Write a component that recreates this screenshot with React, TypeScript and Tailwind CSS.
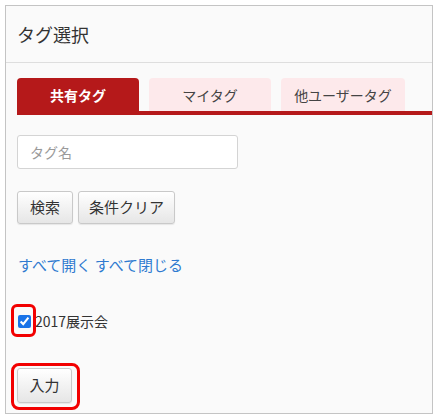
import React, { useState } from 'react';

const font = { fontFamily: '"Noto Sans CJK JP", "Liberation Sans", sans-serif' };

const tabs = ['共有タグ', 'マイタグ', '他ユーザータグ'];

const App: React.FC = () => {
  const [active, setActive] = useState(0);
  const [checked, setChecked] = useState(true);

  return (
    <div className="w-[437px] h-[417px] bg-white p-[5px]" style={font}>
      <div className="w-[428px] h-[409px] border border-[#c4c4c4] bg-[#fafafa] flex flex-col">
        {/* ヘッダー */}
        <div className="h-[57px] border-b border-[#dedede] flex items-center pl-[11px]">
          <h1 className="text-[18px] text-[#333] leading-none">タグ選択</h1>
        </div>

        <div className="pl-[11px] pt-[15px]">
          {/* タブ */}
          <div className="flex gap-[10px] border-b-4 border-[#b5191a]">
            {tabs.map((t, i) => (
              <button
                key={t}
                onClick={() => setActive(i)}
                className={
                  'h-[33px] rounded-t-[4px] text-[14px] leading-none ' +
                  (i === 2 ? 'w-[124px] ' : 'w-[122px] ') +
                  (i === active ? 'bg-[#b5191a] text-white font-bold' : 'bg-[#fde9eb] text-[#444]')
                }
              >
                {t}
              </button>
            ))}
          </div>

          <input
            type="text"
            placeholder="タグ名"
            className="mt-[20px] block w-[221px] h-[34px] rounded-[3px] border border-[#d4d4d4] bg-white px-[12px] text-[14px] placeholder:text-[#9a9a9a] outline-none"
          />

          <div className="mt-[22px] flex gap-[5px]">
            <button className="h-[33px] px-[12px] rounded-[3px] border border-[#c9c9c9] bg-gradient-to-b from-white to-[#e6e6e6] text-[15px] text-[#333] shadow-[0_1px_1px_rgba(0,0,0,0.08)]">
              検索
            </button>
            <button className="h-[33px] px-[10px] rounded-[3px] border border-[#c9c9c9] bg-gradient-to-b from-white to-[#e6e6e6] text-[15px] text-[#333] shadow-[0_1px_1px_rgba(0,0,0,0.08)]">
              条件クリア
            </button>
          </div>

          <div className="mt-[30px] text-[15px] text-[#2f7ad0] leading-[22px] pl-[1px]">
            <a href="#" className="hover:underline">すべて開く</a>{' '}
            <a href="#" className="hover:underline">すべて閉じる</a>
          </div>

          <label className="mt-[35px] flex items-center h-[20px] text-[14px] text-[#333] relative">
            <input
              type="checkbox"
              checked={checked}
              onChange={e => setChecked(e.target.checked)}
              className="w-[13px] h-[13px] ml-[1px] mr-[4px] accent-[#1a73e8]"
            />
            2017展示会
            <span className="absolute left-[-6px] top-[-7px] w-[25px] h-[33px] border-[3px] border-[#f20000] rounded-[6px] pointer-events-none" />
          </label>

          <div className="mt-[37px] relative w-fit">
            <button className="h-[35px] w-[55px] rounded-[3px] border border-[#c9c9c9] bg-gradient-to-b from-white to-[#e6e6e6] text-[15px] text-[#333] shadow-[0_1px_1px_rgba(0,0,0,0.08)]">
              入力
            </button>
            <span className="absolute left-[-6px] top-[-5px] w-[69px] h-[47px] border-[3px] border-[#f20000] rounded-[8px] pointer-events-none" />
          </div>
        </div>
      </div>
    </div>
  );
};

export default App;
